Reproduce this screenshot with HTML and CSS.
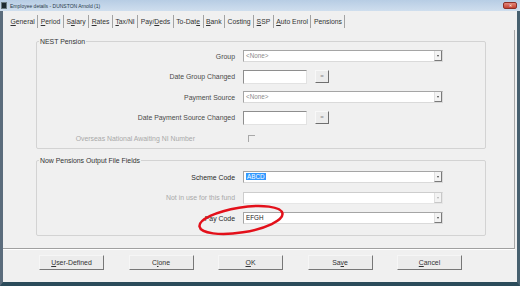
FILE: index.html
```html
<!DOCTYPE html>
<html>
<head>
<meta charset="utf-8">
<link rel="stylesheet" href="styles.css">
</head>
<body>
<div class="window">
  <div class="titlebar">
    <span class="appicon"></span>
    <span class="title">Employee details - DUNSTON Arnold (1)</span>
    <span class="close">&#x2715;</span>
  </div>
  <div class="frame">
    <div class="tabs">
      <span class="tab"><u>G</u>eneral</span>
      <span class="tab"><u>P</u>eriod</span>
      <span class="tab">S<u>a</u>lary</span>
      <span class="tab"><u>R</u>ates</span>
      <span class="tab"><u>T</u>ax/NI</span>
      <span class="tab">Pay/<u>D</u>eds</span>
      <span class="tab">To-Dat<u>e</u></span>
      <span class="tab"><u>B</u>ank</span>
      <span class="tab">Costing</span>
      <span class="tab"><u>S</u>SP</span>
      <span class="tab"><u>A</u>uto Enrol</span>
      <span class="tab active">Pensions</span>
    </div>
    <div class="page">
      <div class="group g1">
        <span class="legend">NEST Pension</span>
        <div class="row"><span class="lbl">Group</span><div class="select"><span class="val none">&lt;None&gt;</span><i class="arrow"></i></div></div>
        <div class="row"><span class="lbl">Date Group Changed</span><div class="datectl"><span class="input"></span><span class="eqbtn">=</span></div></div>
        <div class="row"><span class="lbl">Payment Source</span><div class="select"><span class="val none">&lt;None&gt;</span><i class="arrow"></i></div></div>
        <div class="row"><span class="lbl">Date Payment Source Changed</span><div class="datectl"><span class="input"></span><span class="eqbtn">=</span></div></div>
        <div class="row"><span class="lbl dim short">Overseas National Awaiting NI Number</span><div class="chkwrap"><span class="check"></span></div></div>
      </div>
      <div class="group g2">
        <span class="legend">Now Pensions Output File Fields</span>
        <div class="row"><span class="lbl dark">Scheme Code</span><div class="select"><span class="val"><span class="sel">ABCD</span></span><i class="arrow"></i></div></div>
        <div class="row"><span class="lbl dim">Not in use for this fund</span><div class="select disabled"><span class="val"></span><i class="arrow"></i></div></div>
        <div class="row"><span class="lbl dark">Pay Code</span><div class="select"><span class="val">EFGH</span><i class="arrow"></i></div></div>
      </div>
    </div>
    <div class="buttons">
      <span class="btn"><u>U</u>ser-Defined</span>
      <span class="btn">C<u>l</u>one</span>
      <span class="btn"><u>O</u>K</span>
      <span class="btn">Sa<u>v</u>e</span>
      <span class="btn"><u>C</u>ancel</span>
    </div>
  </div>
  <svg class="ellipse" width="100" height="46" viewBox="0 0 100 46">
    <ellipse cx="46" cy="20" rx="42" ry="12.5" transform="rotate(-9 46 20)" fill="none" stroke="#e3101a" stroke-width="2.5"/>
  </svg>
</div>
</body>
</html>
```

FILE: styles.css
```css
* { box-sizing: border-box; }
body {
  margin: 0;
  background: #ffffff;
  font-family: "Liberation Sans", Arial, sans-serif;
}
.window {
  position: relative;
  width: 520px;
  height: 286px;
  display: flex;
  flex-direction: column;
  background: #f0f0f0;
  overflow: hidden;
}
.titlebar {
  flex: none;
  height: 11px;
  display: flex;
  align-items: center;
  padding-left: 1px;
  background: linear-gradient(#b7cde4, #cfdeee);
}
.appicon {
  width: 6px;
  height: 7px;
  background: #1e2a30;
  border: 1px solid #6a7a80;
}
.title {
  margin-left: 3px;
  font-size: 5px;
  color: #2a3a4a;
}
.close {
  margin-left: auto;
  margin-right: 3px;
  width: 14px;
  height: 7px;
  border-radius: 2px;
  background: linear-gradient(#e4877a, #c24232);
  border: 1px solid #8c3027;
  color: #fff;
  font-size: 4px;
  line-height: 5px;
  text-align: center;
}
.frame {
  flex: 1;
  display: flex;
  flex-direction: column;
  border-left: 3px solid #5b6c7c;
  border-right: 3px solid #47606f;
  border-bottom: 4px solid #2b4b5a;
}
.tabs {
  flex: none;
  height: 19px;
  display: flex;
  align-items: flex-end;
  padding-left: 5px;
  padding-bottom: 2px;
}
.tab {
  height: 13px;
  line-height: 13px;
  padding: 0 2.5px;
  font-size: 6.8px;
  color: #333;
  border-right: 1px solid #a3a3a3;
}
.tab u { text-decoration-thickness: 0.5px; }
.page {
  flex: none;
  height: 219px;
  margin-right: 2px;
  padding: 11px 0 0 33px;
  border-right: 1px solid #a8a8a8;
  border-bottom: 1px solid #a0a0a0;
  box-shadow: 0 1px 0 #ffffff;
}
.group {
  position: relative;
  width: 450px;
  border: 1px solid #d3d3d3;
  border-radius: 2px;
}
.g1 { height: 108px; padding-top: 4px; }
.g2 { height: 76px; margin-top: 11px; padding-top: 6px; }
.legend {
  position: absolute;
  top: -5px;
  left: 2px;
  padding: 0 1px;
  background: #f0f0f0;
  font-size: 6.9px;
  line-height: 9px;
  color: #333;
}
.row {
  height: 20.5px;
  display: grid;
  grid-template-columns: 198px auto;
  column-gap: 8px;
  align-items: center;
}
.lbl {
  text-align: right;
  font-size: 6.9px;
  color: #4a4a4a;
}
.lbl.dark { color: #2a2a2a; }
.lbl.dim { color: #a9a9a9; }
.lbl.short { padding-right: 40px; }
.select {
  position: relative;
  width: 200px;
  height: 12px;
  background: #ffffff;
  border: 1px solid;
  border-color: #a5a5a5 #dadada #dadada #a5a5a5;
  padding-left: 2px;
  font-size: 6.3px;
  line-height: 10px;
  color: #222;
}
.val.none { color: #8a8a8a; }
.sel {
  background: #3399ff;
  color: #ffffff;
  padding: 0 1px;
}
.arrow {
  position: absolute;
  right: 0;
  top: 0;
  width: 8px;
  height: 10px;
  background: #f3f3f3;
  border-left: 1px solid #e0e0e0;
  border-right: 1px solid #7a7a7a;
  border-bottom: 1px solid #7a7a7a;
}
.arrow::after {
  content: "";
  position: absolute;
  left: 2px;
  top: 4px;
  border-left: 1.5px solid transparent;
  border-right: 1.5px solid transparent;
  border-top: 2px solid #444;
}
.select.disabled {
  border-color: #cdcdcd #e6e6e6 #e6e6e6 #cdcdcd;
}
.select.disabled .arrow {
  border-right-color: #c8c8c8;
  border-bottom-color: #c8c8c8;
}
.select.disabled .arrow::after { border-top-color: #b0b0b0; }
.datectl {
  display: flex;
  align-items: center;
}
.input {
  width: 64px;
  height: 14px;
  background: #ffffff;
  border: 1px solid;
  border-color: #8e8e8e #e2e2e2 #e2e2e2 #8e8e8e;
}
.eqbtn {
  margin-left: 8px;
  width: 14px;
  height: 13px;
  background: #ececec;
  border: 1px solid;
  border-color: #f8f8f8 #6f6f6f #6f6f6f #f8f8f8;
  font-size: 6px;
  line-height: 11px;
  text-align: center;
  color: #888;
}
.chkwrap {
  padding-left: 5px;
  display: flex;
}
.check {
  width: 7px;
  height: 7px;
  border-top: 1px solid #a8a8a8;
  border-left: 1px solid #a8a8a8;
}
.buttons {
  display: flex;
  gap: 24.5px;
  padding: 6px 0 0 36px;
}
.btn {
  width: 65px;
  height: 15px;
  background: #ececec;
  border: 1px solid;
  border-color: #f6f6f6 #777 #777 #f6f6f6;
  font-size: 6.9px;
  line-height: 13px;
  text-align: center;
  color: #333;
}
.ellipse {
  position: absolute;
  left: 195px;
  top: 200px;
}
```
